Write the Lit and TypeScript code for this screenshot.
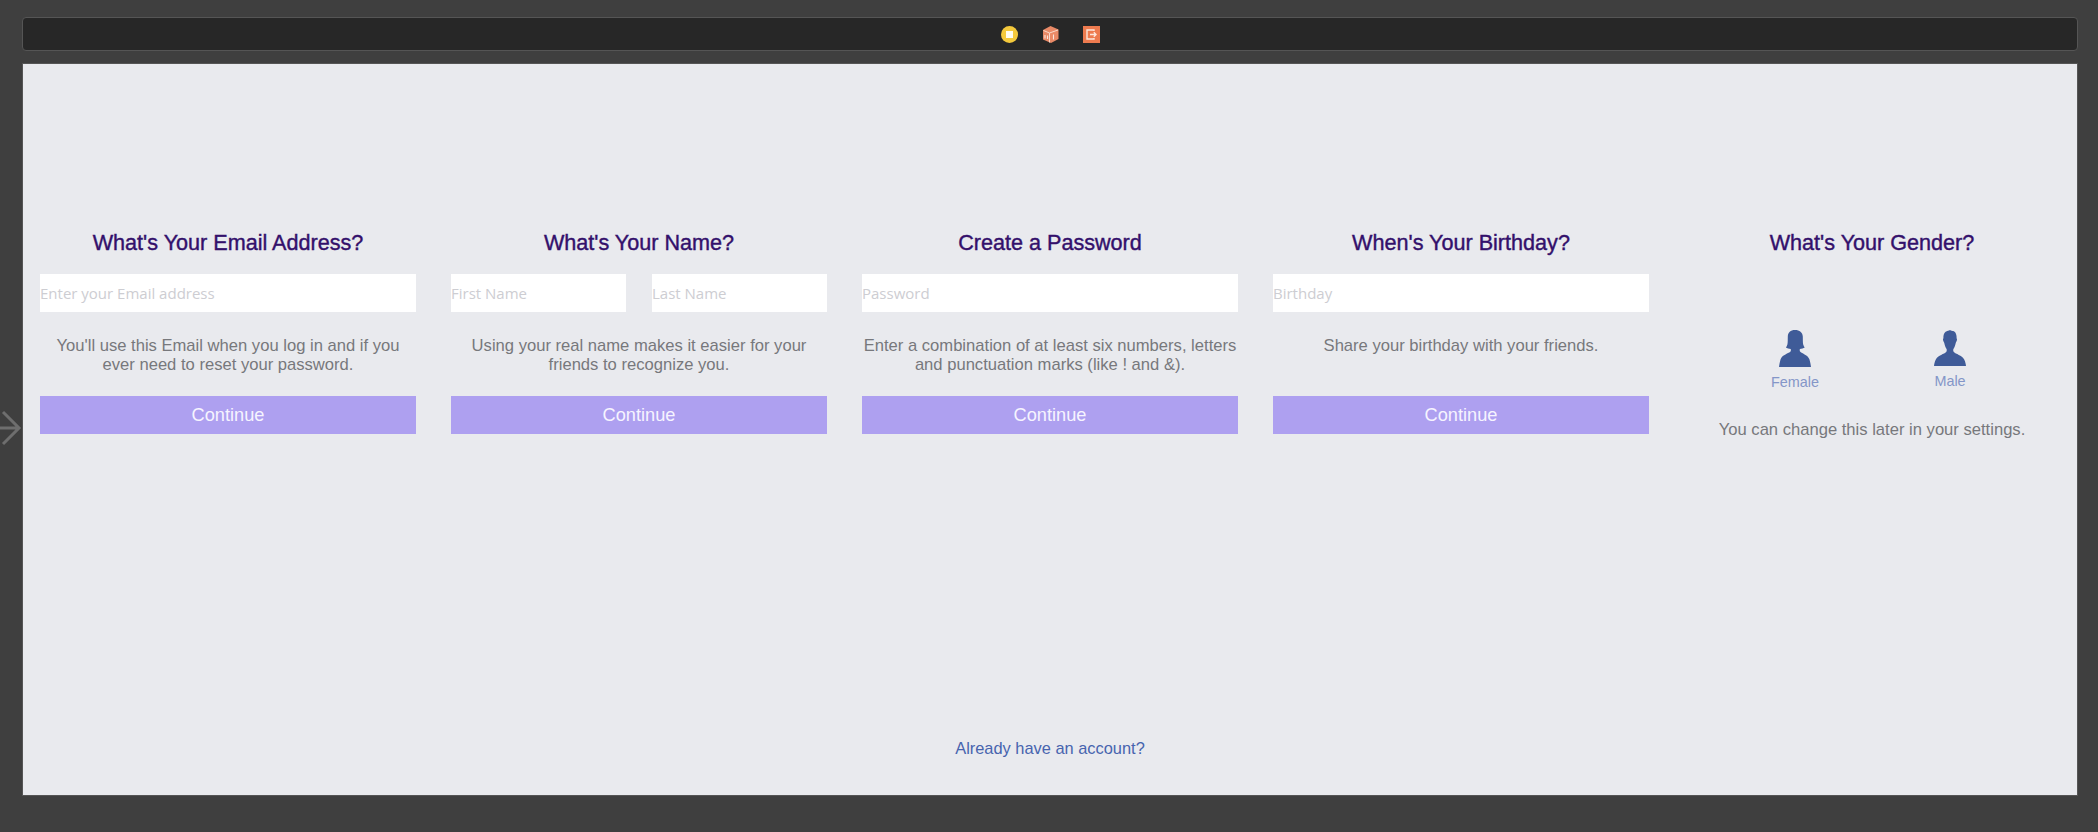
import { LitElement, html, css, svg } from 'lit';
import { customElement } from 'lit/decorators.js';

const female = svg`<path d="M16 0c-4.600 0-7 2.600-7.200 6.500-.1 3 .1 5.800-.4 8-.3 1.300-1 2.300-1.500 3 1.200.8 3 1.200 4.800 1.400.3 1 .3 2-.4 2.900C9 23.700 3 25 1.500 29.500.8 31.800.3 34.500 0 37h32c-.3-2.500-.8-5.200-1.500-7.500C29 25 23 23.700 21.300 21.800c-.7-.9-.7-1.900-.4-2.900 1.800-.2 3.600-.6 4.800-1.400-.5-.7-1.200-1.700-1.500-3-.5-2.200-.3-5-.4-8C23.600 2.600 20.600 0 16 0z"/>`;
const male = svg`<path d="M16 0c-1 1-3 .6-4.400 1.800C9.800 3.300 9.300 5.600 9.400 8c0 .6-.5.800-.4 1.500.1 1.400.7 2.400 1.200 3.300.5 2.400 1.300 4.700 2.400 6.200.3 1.200.2 2.200-.5 3.100C10.500 24 4 25.500 1.800 29.500.6 31.700.2 34.400 0 36h32c-.2-1.600-.6-4.300-1.800-6.500C28 25.500 21.500 24 19.900 22.100c-.7-.9-.8-1.900-.5-3.100 1.100-1.500 1.900-3.800 2.400-6.200.5-.9 1.100-1.900 1.200-3.300.1-.7-.4-.9-.4-1.500.1-3-.8-6.200-3.300-7C18.500 1 17 .9 16 0z"/>`;

@customElement('app-root')
export class AppRoot extends LitElement {
  static styles = css`
    :host {
      display: block;
      height: 832px;
      background: #3f3f3f;
      position: relative;
      overflow: hidden;
      font-family: 'Liberation Sans', Arial, sans-serif;
      box-sizing: border-box;
      padding: 17px 20px 0 22px;
    }
    .toolbar {
      height: 34px;
      box-sizing: border-box;
      background: #272727;
      border: 1px solid #555;
      border-radius: 4px;
      display: flex;
      align-items: center;
      justify-content: center;
      gap: 24px;
      margin-bottom: 12px;
    }
    .toolbar svg { display: block; width: 17px; height: 17px; }
    .scene {
      height: 733px;
      box-sizing: border-box;
      background: #e9eaee;
      border: 1px solid #555;
      display: flex;
      flex-direction: column;
      padding: 0 17px;
    }
    .columns {
      display: flex;
      gap: 35px;
      margin-top: 167px;
    }
    .col {
      width: 376px;
      flex: none;
      display: flex;
      flex-direction: column;
      align-items: stretch;
      text-align: center;
    }
    h2 {
      margin: 0;
      font-size: 21.6px;
      font-weight: 400;
      -webkit-text-stroke: 0.4px #33106b;
      line-height: 24px;
      color: #33106b;
      height: 24px;
    }
    .inputs {
      display: flex;
      gap: 26px;
      margin-top: 19px;
    }
    input {
      flex: 1 1 0;
      min-width: 0;
      height: 38px;
      box-sizing: border-box;
      border: none;
      outline: none;
      background: #fff;
      padding: 0;
      margin: 0;
      font-family: 'Open Sans', 'Liberation Sans', sans-serif;
      font-size: 15px;
    }
    input::placeholder { color: #cdcdd2; opacity: 1; }
    p {
      margin: 24px 0 0;
      font-size: 16.6px;
      line-height: 19px;
      height: 38px;
      color: #77787c;
    }
    .continue {
      margin-top: 22px;
      height: 38px;
      box-sizing: border-box;
      padding-top: 1px;
      background: #aea0f0;
      color: #f6f4ff;
      font-size: 18.2px;
      display: flex;
      align-items: center;
      justify-content: center;
    }
    .genders {
      display: flex;
      height: 94px;
      margin-top: 75px;
      padding: 0 94px 0 95px;
      justify-content: space-between;
    }
    .gender {
      display: flex;
      flex-direction: column;
      align-items: center;
      width: 32px;
      color: #8496c8;
      font-size: 14.4px;
      line-height: 16px;
      white-space: nowrap;
    }
    .gender svg { display: block; width: 32px; height: 37px; fill: #3f5b98; margin-bottom: 7px; flex: none; }
    .gender.m svg { margin-bottom: 6px; }
    .gender-note {
      margin: -4px 0 0;
      height: auto;
    }
    .link {
      margin-top: auto;
      margin-bottom: 37px;
      text-align: center;
      font-size: 16.4px;
      line-height: 19px;
      color: #4764ae;
    }
    .entry {
      position: absolute;
      left: 0;
      top: 410px;
      width: 22px;
      height: 36px;
    }
  `;

  field(title: string, text: string, inputs: string[]) {
    return html`
      <div class="col">
        <h2>${title}</h2>
        <div class="inputs">
          ${inputs.map(i => html`<input type="text" placeholder=${i} />`)}
        </div>
        <p>${text}</p>
        <div class="continue">Continue</div>
      </div>
    `;
  }

  render() {
    return html`
      <div class="toolbar">
        <svg viewBox="0 0 17 17">
          <circle cx="8.500" cy="8.500" r="8.500" fill="#f4c93c" />
          <rect x="5" y="5" width="7" height="7" fill="#fffdf0" />
        </svg>
        <svg viewBox="0 0 17 17">
          <path d="M8.500 0 16.500 3.500V13L9 17 1 13.500V4z" fill="#e98a67" />
          <path d="M1.500 4.500 7.500 7V16.500M7.500 7 16 4" fill="none" stroke="#f9d9cb" stroke-width="1" />
          <path d="M3 9v3.500M5.500 9.500v3.500M11.500 8.500v5" fill="none" stroke="#fbe6dc" stroke-width="1.100" />
        </svg>
        <svg viewBox="0 0 17 17">
          <rect width="17" height="17" fill="#ee7b4f" />
          <path d="M11 5V4H4v9h7v-1" fill="none" stroke="#fde6da" stroke-width="1.400" />
          <path d="M7 8.500h6M10.800 6.300l2.200 2.200-2.200 2.200" fill="none" stroke="#fde6da" stroke-width="1.400" />
        </svg>
      </div>
      <div class="scene">
        <div class="columns">
          ${this.field(
            "What's Your Email Address?",
            "You'll use this Email when you log in and if you ever need to reset your password.",
            ['Enter your Email address'],
          )}
          ${this.field(
            "What's Your Name?",
            'Using your real name makes it easier for your friends to recognize you.',
            ['First Name', 'Last Name'],
          )}
          ${this.field(
            'Create a Password',
            'Enter a combination of at least six numbers, letters and punctuation marks (like ! and &).',
            ['Password'],
          )}
          ${this.field("When's Your Birthday?", 'Share your birthday with your friends.', ['Birthday'])}
          <div class="col">
            <h2>What's Your Gender?</h2>
            <div class="genders">
              <div class="gender"><svg viewBox="0 0 32 37">${female}</svg>Female</div>
              <div class="gender m"><svg viewBox="0 0 32 37">${male}</svg>Male</div>
            </div>
            <p class="gender-note">You can change this later in your settings.</p>
          </div>
        </div>
        <div class="link">Already have an account?</div>
      </div>
      <svg class="entry" viewBox="0 0 22 36">
        <path d="M0 18H19M3 2 19 18 3 34" fill="none" stroke="#6e6e6e" stroke-width="3" />
      </svg>
    `;
  }
}
